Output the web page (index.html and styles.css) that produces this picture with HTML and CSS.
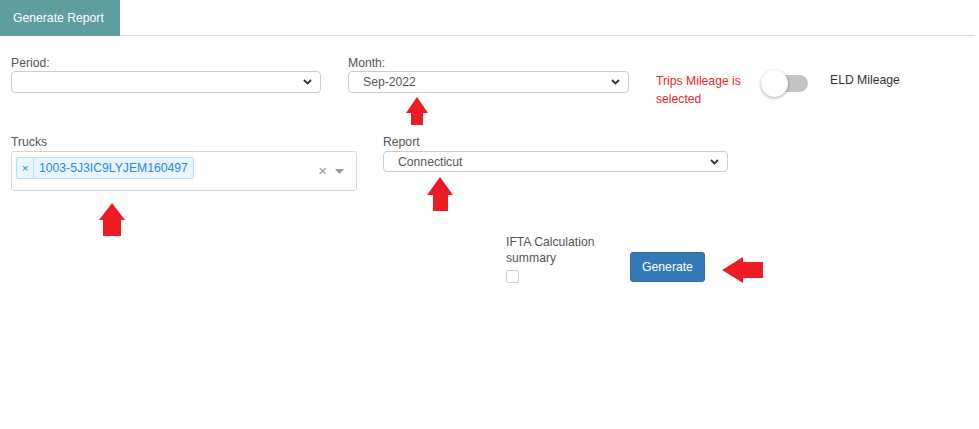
FILE: index.html
```html
<!DOCTYPE html>
<html lang="en">
<head>
  <meta charset="UTF-8" />
  <meta name="viewport" content="width=device-width, initial-scale=1.0"/>
  <title>Generate Report</title>
  <link rel="stylesheet" href="styles.css">
</head>
<body>
  <nav class="tabs">
    <div class="tab active">Generate Report<span class="dot"></span></div>
  </nav>

  <main class="form">
    <!-- Period / Month / mileage switch -->
    <div class="row row-top">
      <div class="field period">
        <label>Period:</label>
        <div class="select">
          <span class="value"></span>
          <svg class="chev" width="9" height="6" viewBox="0 0 9 6"><path d="M1 1l3.5 3.5L8 1" fill="none" stroke="#333" stroke-width="1.8"/></svg>
        </div>
      </div>
      <div class="field month">
        <label>Month:</label>
        <div class="select">
          <span class="value">Sep-2022</span>
          <svg class="chev" width="9" height="6" viewBox="0 0 9 6"><path d="M1 1l3.5 3.5L8 1" fill="none" stroke="#333" stroke-width="1.8"/></svg>
        </div>
        <svg class="arrow-up a-month" width="22" height="28" viewBox="0 0 22 28"><polygon points="11,0 22,16 17,16 17,28 5,28 5,16 0,16" fill="#ed1c24"/></svg>
      </div>
      <div class="mileage-note">Trips Mileage is selected</div>
      <div class="switch"><span class="knob"></span></div>
      <div class="eld">ELD Mileage</div>
    </div>

    <!-- Trucks / Report -->
    <div class="row row-mid">
      <div class="field trucks">
        <label>Trucks</label>
        <div class="multi">
          <span class="tag"><span class="tag-x">×</span><span class="tag-text">1003-5J3IC9LYJEM160497</span></span>
          <span class="multi-tools">
            <span class="clear">×</span>
            <svg width="9" height="5" viewBox="0 0 9 5"><polygon points="0,0 9,0 4.5,5" fill="#999"/></svg>
          </span>
        </div>
        <svg class="arrow-up a-trucks" width="26" height="33" viewBox="0 0 26 33"><polygon points="13,0 26,17 22,17 22,33 4,33 4,17 0,17" fill="#ed1c24"/></svg>
      </div>
      <div class="field report">
        <label>Report</label>
        <div class="select small">
          <span class="value">Connecticut</span>
          <svg class="chev" width="9" height="6" viewBox="0 0 9 6"><path d="M1 1l3.5 3.5L8 1" fill="none" stroke="#333" stroke-width="1.8"/></svg>
        </div>
        <svg class="arrow-up a-report" width="26" height="34" viewBox="0 0 26 34"><polygon points="13,0 26,18 21,18 21,34 6,34 6,18 0,18" fill="#ed1c24"/></svg>
      </div>
    </div>

    <!-- Summary + submit -->
    <div class="row row-bottom">
      <div class="summary">
        <label>IFTA Calculation summary</label>
        <span class="checkbox"></span>
      </div>
      <button class="btn-generate">Generate</button>
      <svg class="arrow-left" width="41" height="26" viewBox="0 0 41 26"><polygon points="0,13 21,0 21,5 41,5 41,21 21,21 21,26" fill="#ed1c24"/></svg>
    </div>
  </main>
</body>
</html>
```

FILE: styles.css
```css
body {
  font-family: 'Liberation Sans', Arial, sans-serif;
  font-size: 12.2px;
  margin: 0;
  padding: 0;
  background-color: #fff;
  color: #444;
}

.tabs {
  display: flex;
  width: 975px;
  border-bottom: 1px solid #ddd;
}

.tab {
  position: relative;
  width: 120px;
  height: 36px;
  line-height: 36px;
  padding-left: 13px;
  box-sizing: border-box;
  background-color: #5f9ea0;
  color: #fff;
  margin-bottom: -1px;
}

.tab .dot {
  position: absolute;
  top: 9px;
  left: 59px;
  width: 2px;
  height: 2px;
  border-radius: 50%;
  background: #e53;
}

.form {
  padding-left: 11px;
}

.row {
  display: flex;
  align-items: flex-start;
}

.row-top {
  margin-top: 19px;
}

.field {
  position: relative;
}

.field label {
  display: block;
  height: 16px;
  line-height: 16px;
  color: #555;
}

.select {
  display: flex;
  align-items: center;
  justify-content: space-between;
  height: 22px;
  border: 1px solid #ccc;
  border-radius: 4px;
  box-sizing: border-box;
  padding: 0 8px 0 14px;
  color: #555;
}

.select.small {
  height: 21px;
}

.period {
  width: 310px;
}

.month {
  width: 281px;
  margin-left: 27px;
}

.arrow-up {
  position: absolute;
}

.a-month {
  left: 58px;
  top: 42px;
}

.mileage-note {
  width: 92px;
  margin-left: 27px;
  margin-top: 17px;
  line-height: 18px;
  color: #f0262b;
}

.switch {
  position: relative;
  width: 38px;
  height: 17px;
  margin-left: 22px;
  margin-top: 20px;
  border-radius: 9px;
  background: #c4c4c4;
}

.knob {
  position: absolute;
  left: -9px;
  top: -5px;
  width: 27px;
  height: 27px;
  border-radius: 50%;
  background: #fff;
  box-shadow: 0 1px 3px rgba(0, 0, 0, 0.35);
}

.eld {
  margin-left: 22px;
  margin-top: 18px;
  color: #333;
}

.row-mid {
  margin-top: 26px;
}

.trucks {
  width: 346px;
}

.trucks label,
.report label {
  height: 17px;
}

.multi {
  display: flex;
  align-items: flex-start;
  justify-content: space-between;
  height: 40px;
  border: 1px solid #d4d4d4;
  border-radius: 3px;
  box-sizing: border-box;
  padding: 5px 12px 0 4px;
}

.tag {
  display: flex;
  height: 22px;
  box-sizing: border-box;
  border: 1px solid #b8dcfb;
  border-radius: 2px;
  background: #e9f4fe;
  color: #1e8ae6;
}

.tag-x {
  width: 16px;
  text-align: center;
  line-height: 20px;
  font-size: 11.5px;
  border-right: 1px solid #b8dcfb;
}

.tag-text {
  padding: 0 5px;
  line-height: 20px;
}

.multi-tools {
  display: flex;
  align-items: center;
  gap: 8px;
  margin-top: 9px;
}

.clear {
  color: #999;
  font-size: 15px;
  line-height: 10px;
}

.a-trucks {
  left: 88px;
  top: 69px;
}

.report {
  width: 345px;
  margin-left: 26px;
}

.a-report {
  left: 44px;
  top: 43px;
}

.row-bottom {
  margin-top: 43px;
  margin-left: 495px;
}

.summary {
  width: 124px;
}

.summary label {
  display: block;
  width: 110px;
  line-height: 16px;
  color: #555;
}

.checkbox {
  display: block;
  width: 11px;
  height: 11px;
  margin-top: 4px;
  border: 1px solid #ccc;
  border-radius: 2px;
}

button {
  font-family: inherit;
}

.btn-generate {
  margin-top: 18px;
  width: 75px;
  height: 30px;
  border: 1px solid #2e6da4;
  border-radius: 3px;
  background-color: #337ab7;
  color: #fff;
  font-size: 12.2px;
  cursor: pointer;
}

.arrow-left {
  margin-left: 17px;
  margin-top: 23px;
}
```
